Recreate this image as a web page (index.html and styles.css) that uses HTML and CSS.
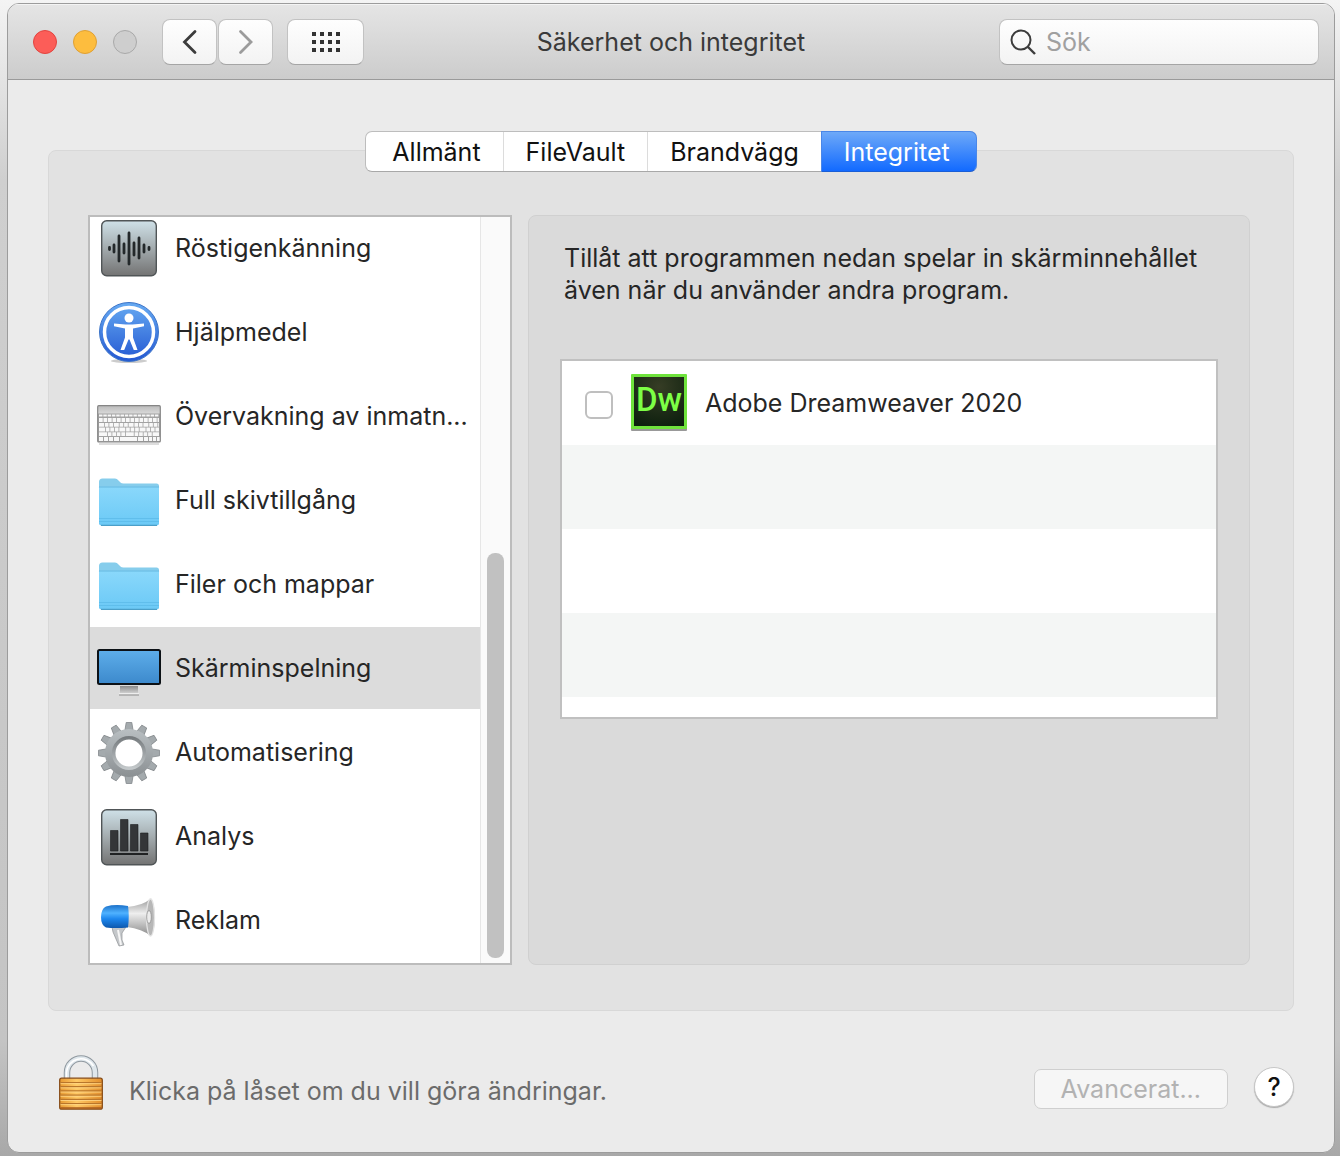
FILE: index.html
```html
<!DOCTYPE html>
<html lang="sv">
<head>
  <meta charset="UTF-8">
  <title>Säkerhet och integritet</title>
  <link rel="stylesheet" href="styles.css">
</head>
<body>
  <div class="window">
    <!-- Titelrad -->
    <header class="titlebar">
      <div class="titlebar-left">
        <div class="lights">
          <button class="light light-close" aria-label="Stäng"></button>
          <button class="light light-min" aria-label="Minimera"></button>
          <button class="light light-zoom" aria-label="Zooma" disabled></button>
        </div>
        <div class="nav">
          <button class="tool" aria-label="Bakåt">
            <svg width="16" height="26" viewBox="0 0 16 26"><path d="M13 2.500 2.500 13 13 23.500" fill="none" stroke="#3c3c3c" stroke-width="2.800" stroke-linecap="round"/></svg>
          </button>
          <button class="tool" aria-label="Framåt">
            <svg width="16" height="26" viewBox="0 0 16 26"><path d="M2.500 2.500 13 13 2.500 23.500" fill="none" stroke="#9b9b9b" stroke-width="2.800" stroke-linecap="round"/></svg>
          </button>
        </div>
        <button class="tool tool-wide" aria-label="Visa alla">
          <svg width="30" height="22" viewBox="0 0 30 22"><path d="M1 3h28M1 11h28M1 19h28" stroke="#333" stroke-width="4" stroke-dasharray="4 4"/></svg>
        </button>
      </div>
      <h1>Säkerhet och integritet</h1>
      <label class="search">
        <svg width="26" height="26" viewBox="0 0 26 26"><g fill="none" stroke="#3c3c3c" stroke-width="2"><circle cx="11" cy="11" r="9.500"/><path d="M17.500 17.500 25 25" stroke-width="2.400"/></g></svg>
        <input type="text" placeholder="Sök" aria-label="Sök">
      </label>
    </header>

    <main>
      <nav class="tabs">
        <button>Allmänt</button>
        <button>FileVault</button>
        <button>Brandvägg</button>
        <button class="active">Integritet</button>
      </nav>

      <div class="panel">
        <!-- Kategorier -->
        <div class="sidebar">
          <ul class="categories">
            <li>
              <svg class="icon" viewBox="0 0 64 64">
                <defs><linearGradient id="steel" x2="0" y2="1"><stop offset="0" stop-color="#cfe1e8"/><stop offset=".5" stop-color="#a3abae"/><stop offset="1" stop-color="#737373"/></linearGradient></defs>
                <rect x="4.700" y="4.700" width="54.600" height="55" rx="5" fill="url(#steel)" stroke="#505557" stroke-width="1.400"/>
                <path d="M12.500 31.500v2M17 29v7M22 20v25M27 28v9M32 17v31M37 27v12M42 22v20M47 29v7M52 31.500v2" stroke="#23282a" stroke-width="2.800" stroke-linecap="round"/>
              </svg>
              Röstigenkänning
            </li>
            <li>
              <svg class="icon" viewBox="0 0 64 64">
                <defs><linearGradient id="access" x2="0" y2="1"><stop offset="0" stop-color="#66aaf2"/><stop offset="1" stop-color="#2458d2"/></linearGradient></defs>
                <ellipse cx="32" cy="61" rx="18" ry="2" fill="#ccc"/>
                <circle cx="32" cy="32" r="29.500" fill="url(#access)" stroke="#3c74c8"/>
                <circle cx="32" cy="32" r="24.500" fill="none" stroke="#fff" stroke-width="3.500"/>
                <circle cx="32" cy="18" r="4.500" fill="#fff"/>
                <path d="M17 23.500l11.500 1h7l11.500-1v2.700l-11 2.300v9L40.500 50h-3.700L32.500 39.500h-1L27.200 50h-3.700L28 37.500v-9L17 26.200z" fill="#fff"/>
              </svg>
              Hjälpmedel
            </li>
            <li>
              <svg class="icon" viewBox="0 0 64 64">
                <defs><linearGradient id="alu" x2="0" y2="1"><stop offset="0" stop-color="#bcbcbc"/><stop offset="1" stop-color="#dadada"/></linearGradient></defs>
                <g transform="translate(0 1)">
                  <path d="M2 58h60v2H2z" fill="#ddd"/>
                  <path d="M1 21h62v8H1z" fill="url(#alu)"/>
                  <path d="M1 28.500h62V57H1z" fill="#a2a2a2"/>
                  <g stroke="#f8f8f8" fill="none">
                    <path d="M2 30.500h60" stroke-width="2" stroke-dasharray="3.500 .8"/>
                    <path d="M2 35h60" stroke-width="4" stroke-dasharray="3.700 .8"/>
                    <path d="M2 39.800h60" stroke-width="3.800" stroke-dasharray="5 .8 3.700 .8 3.700 .8"/>
                    <path d="M2 44.500h60" stroke-width="3.800" stroke-dasharray="6 .8 3.700 .8 3.700 .8 3.700 .8"/>
                    <path d="M2 49.200h60" stroke-width="3.800" stroke-dasharray="8 .8 3.700 .8 3.700 .8 3.700 .8 3.700 .8"/>
                    <path d="M2 54h4m1 0h4m1 0h4m1 0h5m1 0h17m1 0h5m1 0h4m1 0h3m1 0h3m1 0h3" stroke-width="3.800"/>
                  </g>
                  <rect x=".7" y="20.700" width="62.600" height="36.300" rx="1" fill="none" stroke="#858585" stroke-width="1.200"/>
                </g>
              </svg>
              Övervakning av inmatn...
            </li>
            <li>
              <svg class="icon" viewBox="0 0 64 64">
                <defs>
                  <linearGradient id="folder" x2="0" y2="1"><stop offset="0" stop-color="#8ad8fb"/><stop offset="1" stop-color="#6bc9f6"/></linearGradient>
                  <g id="folder-shape">
                    <path d="M2 54V12q0-3.500 3.500-3.500H18q2 0 3.500 2l2 2q1 1 3 1h33q2.500 0 2.500 2.500v38z" fill="#86cdec"/>
                    <path d="M2 17.500q0-1 1-1h58q1 0 1 1V53q0 2.500-2.500 2.500h-55Q2 55.500 2 53z" fill="url(#folder)"/>
                    <path d="M2 17h60" stroke="#66b7df"/>
                    <path d="M2 48.500h60M2 51.500h60" stroke="#5cbae8" stroke-width=".8"/>
                    <path d="M4 55.300h56" stroke="#4b9fc8" stroke-width="1.300"/>
                  </g>
                </defs>
                <use href="#folder-shape" y="2"/>
              </svg>
              Full skivtillgång
            </li>
            <li>
              <svg class="icon" viewBox="0 0 64 64"><use href="#folder-shape" y="2"/></svg>
              Filer och mappar
            </li>
            <li class="selected">
              <svg class="icon" viewBox="0 0 64 64">
                <defs>
                  <linearGradient id="screen" x2="0" y2="1"><stop offset="0" stop-color="#5eaeea"/><stop offset="1" stop-color="#3c89cc"/></linearGradient>
                  <linearGradient id="stand" x2="0" y2="1"><stop offset="0" stop-color="#8b8b8b"/><stop offset="1" stop-color="#d8d8d8"/></linearGradient>
                </defs>
                <g transform="translate(0 3)">
                  <path d="M23 47h18v8H23z" fill="url(#stand)"/>
                  <path d="M22 54h20v1.500H22z" fill="#eee"/>
                  <path d="M22 56h20" stroke="#8c8c8c"/>
                  <rect x="1" y="11" width="62" height="34" rx="1.500" fill="url(#screen)" stroke="#0c1116" stroke-width="2"/>
                </g>
              </svg>
              Skärminspelning
            </li>
            <li>
              <svg class="icon" viewBox="0 0 64 64">
                <defs>
                  <linearGradient id="gear" gradientUnits="userSpaceOnUse" x1="0" y1="8" x2="0" y2="56"><stop offset="0" stop-color="#b9bfc2"/><stop offset="1" stop-color="#8b9093"/></linearGradient>
                  <linearGradient id="ring" x2="0" y2="1"><stop offset="0" stop-color="#777c7f"/><stop offset="1" stop-color="#c3c8ca"/></linearGradient>
                  <path id="teeth" d="M27.500 12l1.700-10.500h5.600L36.500 12zM27.500 52l1.700 10.500h5.600L36.500 52z"/>
                </defs>
                <g transform="translate(0 1)">
                  <g fill="#a4aaad" stroke="#83888b" stroke-width=".8">
                    <use href="#teeth"/>
                    <use href="#teeth" transform="rotate(30 32 32)"/>
                    <use href="#teeth" transform="rotate(60 32 32)"/>
                    <use href="#teeth" transform="rotate(90 32 32)"/>
                    <use href="#teeth" transform="rotate(120 32 32)"/>
                    <use href="#teeth" transform="rotate(150 32 32)"/>
                  </g>
                  <circle cx="32" cy="32" r="19" fill="none" stroke="url(#gear)" stroke-width="10"/>
                  <circle cx="32" cy="32" r="15.300" fill="#fff" stroke="url(#ring)" stroke-width="3.500"/>
                </g>
              </svg>
              Automatisering
            </li>
            <li>
              <svg class="icon" viewBox="0 0 64 64">
                <g transform="translate(0 1)">
                  <rect x="4.700" y="4.700" width="54.600" height="55" rx="5" fill="url(#steel)" stroke="#505557" stroke-width="1.400"/>
                  <path d="M13.500 25.500h7.500V46h-7.500zM23.500 14.500H31V46h-7.500zM33.500 19.500H41V46h-7.500zM43.500 28H51v18h-7.500z" fill="#343638" stroke="#1d1f20" stroke-width=".6"/>
                  <path d="M13 49h38" stroke="#202223" stroke-width="2"/>
                </g>
              </svg>
              Analys
            </li>
            <li>
              <svg class="icon" viewBox="0 0 64 64">
                <defs>
                  <linearGradient id="blue" x2="0" y2="1"><stop offset="0" stop-color="#1d72ca"/><stop offset=".35" stop-color="#4fb2ff"/><stop offset=".6" stop-color="#1d87ee"/><stop offset="1" stop-color="#0e58ad"/></linearGradient>
                  <linearGradient id="horn" x2="0" y2="1"><stop offset="0" stop-color="#999"/><stop offset=".4" stop-color="#eee"/><stop offset="1" stop-color="#8a8a8a"/></linearGradient>
                </defs>
                <g transform="translate(0 1)">
                  <path d="M15 38h14l-4 6v7l2 5-5 1-6-14z" fill="#c4c7ca" stroke="#8f9295" stroke-width=".7"/>
                  <path d="M21 41l3 15" stroke="#f6f6f6" stroke-width="2"/>
                  <path d="M30 18q15-1 24-8.500 4 7 4 19t-4 18.500Q45 40 30 38z" fill="url(#horn)"/>
                  <path d="M9 17.500Q18 15 31 17q1.500 10 0 21.500-13 1-22 0Q4 36 4 28t5-10.500z" fill="url(#blue)"/>
                  <ellipse cx="53.500" cy="28.500" rx="4" ry="18.500" fill="#b7b7b7" stroke="#e4e4e4" stroke-width="1.300"/>
                  <ellipse cx="52" cy="28" rx="2.300" ry="6.500" fill="#ececec" stroke="#888" stroke-width=".7"/>
                </g>
              </svg>
              Reklam
            </li>
          </ul>
          <div class="scrollbar"><div class="thumb"></div></div>
        </div>

        <!-- Program med åtkomst -->
        <section class="details">
          <p>Tillåt att programmen nedan spelar in skärminnehållet även när du använder andra program.</p>
          <ul class="apps">
            <li>
              <label>
                <input type="checkbox">
                <svg class="app-icon" width="58" height="58" viewBox="0 0 58 58">
                  <defs><radialGradient id="dw" cx=".5" cy=".2" r=".9"><stop offset="0" stop-color="#363d25"/><stop offset="1" stop-color="#0b1e0d"/></radialGradient></defs>
                  <rect x="1" y="1" width="56" height="56" rx="1" fill="#999"/>
                  <rect x="1" y="0" width="56" height="55" rx="1" fill="#6fe33c"/>
                  <rect x="4" y="3" width="50" height="49" fill="url(#dw)"/>
                  <text class="dw-text" x="29" y="37" text-anchor="middle">Dw</text>
                </svg>
                Adobe Dreamweaver 2020
              </label>
            </li>
            <li></li>
            <li></li>
            <li></li>
          </ul>
        </section>
      </div>
    </main>

    <footer>
      <button class="lock" aria-label="Lås upp">
        <svg width="46" height="56" viewBox="0 0 46 56">
          <defs><linearGradient id="gold" x2="1" y2="0"><stop offset="0" stop-color="#e79a32"/><stop offset=".4" stop-color="#ffc965"/><stop offset="1" stop-color="#e28d2b"/></linearGradient></defs>
          <path d="M9 24V17.500a14 14 0 0 1 28 0V24" fill="none" stroke="#8f989f" stroke-width="6.500"/>
          <path d="M9 24V17.500a14 14 0 0 1 28 0V24" fill="none" stroke="#dfe7ec" stroke-width="4.500"/>
          <path d="M8.500 24V17.500a14.500 14.500 0 0 1 27-6.500" fill="none" stroke="#fff" stroke-width="1.500"/>
          <rect x="1.700" y="23.200" width="42.600" height="31" rx="2" fill="url(#gold)" stroke="#874c18" stroke-width="1.300"/>
          <path d="M2.500 27.500h41M2.500 31.700h41M2.500 35.900h41M2.500 40.100h41M2.500 44.300h41M2.500 48.500h41" stroke="#b9762b" stroke-width="1.200"/>
          <path d="M2.500 28.700h41M2.500 32.900h41M2.500 37.100h41M2.500 41.300h41M2.500 45.500h41M2.500 49.700h41" stroke="#ffd98c" stroke-width=".8"/>
          <path d="M2.500 53h41" stroke="#a85b1d" stroke-width="1.500"/>
        </svg>
      </button>
      <span class="hint">Klicka på låset om du vill göra ändringar.</span>
      <button class="advanced" disabled>Avancerat...</button>
      <button class="help" aria-label="Hjälp">?</button>
    </footer>
  </div>
</body>
</html>
```
FILE: styles.css
```css
* {
  box-sizing: border-box;
}

body {
  margin: 0;
  padding: 3px 5px 3px 7px;
  height: 100vh;
  background: linear-gradient(#f4f4f4, #cfcfcf 180px, #c4c4c4 90%, #a8a8a8);
  font-family: Inter, "Liberation Sans", sans-serif;
  font-size: 25px;
  line-height: 32px;
  color: #262626;
}

button, input {
  font: inherit;
  color: inherit;
}
button {
  padding: 0;
  border: none;
}
ul {
  list-style: none;
  margin: 0;
  padding: 0;
}
svg {
  display: block;
  flex: none;
}

.window {
  height: 100%;
  display: flex;
  flex-direction: column;
  background: #ebebeb;
  border: 1px solid #9c9c9c;
  border-radius: 12px;
  overflow: hidden;
}

/* Titelrad */
.titlebar {
  display: grid;
  grid-template-columns: 1fr auto 1fr;
  align-items: center;
  height: 76px;
  padding: 0 15px;
  background: linear-gradient(#e5e5e5, #cccccc);
  border-bottom: 1px solid #9a9a9a;
  box-shadow: inset 0 1px #f4f4f4;
}
.titlebar h1 {
  margin: 0;
  font-size: 25px;
  font-weight: 400;
  color: #3a3a3a;
}
.titlebar-left, .lights, .nav {
  display: flex;
  align-items: center;
}
.titlebar-left {
  gap: 14px;
}
.lights {
  gap: 16px;
  margin: 0 11px 0 10px;
}
.light {
  width: 24px;
  height: 24px;
  border: 1px solid #e2443f;
  border-radius: 50%;
  background: #fc5d58;
}
.light-min {
  background: #fdbd3e;
  border-color: #dfa034;
}
.light-zoom {
  background: #cecece;
  border-color: #a9a9a9;
}
.nav {
  gap: 1px;
}
.tool {
  display: flex;
  align-items: center;
  justify-content: center;
  width: 55px;
  height: 46px;
  background: linear-gradient(#fefefe, #f3f3f3);
  border: 1px solid #c2c2c2;
  border-bottom-color: #a5a5a5;
  border-radius: 8px;
}
.tool-wide {
  width: 77px;
}
.search {
  justify-self: end;
  display: flex;
  align-items: center;
  gap: 10px;
  width: 320px;
  height: 46px;
  padding: 0 10px;
  background: linear-gradient(#fefefe, #f3f3f3);
  border: 1px solid #c2c2c2;
  border-bottom-color: #a5a5a5;
  border-radius: 8px;
}
.search input {
  flex: 1;
  min-width: 0;
  padding: 0;
  border: none;
  outline: none;
  background: none;
}
.search input::placeholder {
  color: #a0a0a0;
}

/* Innehåll */
main {
  flex: 1;
  min-height: 0;
  display: flex;
  flex-direction: column;
  padding: 51px 40px 0;
}
.tabs {
  align-self: center;
  display: flex;
  height: 41px;
  margin-bottom: -22px;
  z-index: 1;
  background: #fff;
  border: 1px solid #bdbdbd;
  border-bottom-color: #a8a8a8;
  border-radius: 7px;
}
.tabs button {
  padding: 0 22px;
  background: none;
  border-right: 1px solid #dcdcdc;
  color: #111;
}
.tabs button:first-child {
  padding-left: 26px;
}
.tabs .active {
  margin: -1px;
  padding-right: 26px;
  border: 1px solid #4a87e8;
  border-bottom-color: #1a5ed6;
  border-radius: 0 7px 7px 0;
  background: linear-gradient(#6ea9f8, #126aff);
  color: #fff;
}
.panel {
  flex: 1;
  min-height: 0;
  display: flex;
  gap: 16px;
  padding: 64px 43px 45px 39px;
  background: #e2e2e2;
  border: 1px solid #d8d8d8;
  border-radius: 8px;
}

.sidebar {
  flex: none;
  width: 424px;
  display: flex;
  background: #fff;
  border: 2px solid #bcbcbc;
}
/* listan är rullad till botten */
.categories {
  flex: 1;
  min-width: 0;
  display: flex;
  flex-direction: column;
  justify-content: flex-end;
  overflow: hidden;
  padding-bottom: 2px;
}
.categories li {
  flex: none;
  display: flex;
  align-items: center;
  gap: 14px;
  height: 82px;
  margin-top: 2px;
  padding: 0 7px;
  white-space: nowrap;
}
.categories .selected {
  background: #dcdcdc;
}
.icon {
  width: 64px;
  height: 64px;
}
.scrollbar {
  display: flex;
  flex-direction: column;
  justify-content: flex-end;
  width: 30px;
  padding: 5px 6px;
  background: #fafafa;
  border-left: 1px solid #e6e6e6;
}
.thumb {
  height: 55%;
  border-radius: 8px;
  background: #c1c1c1;
}

.details {
  flex: 1;
  min-width: 0;
  padding: 26px 31px;
  background: #dadada;
  border: 1px solid #d0d0d0;
  border-radius: 8px;
}
.details p {
  margin: 0 4px 53px;
}
.apps {
  height: 360px;
  background: #fff;
  border: 2px solid #c0c0c0;
}
.apps li {
  height: 84px;
}
.apps li:nth-child(even) {
  background: #f4f6f5;
}
.apps label {
  display: flex;
  align-items: center;
  height: 100%;
  padding-left: 23px;
}
.apps input {
  appearance: none;
  width: 28px;
  height: 28px;
  margin: 4px 17px 0 0;
  border: 2px solid #bfbfbf;
  border-radius: 6px;
  background: #fff;
}
.app-icon {
  margin-right: 17px;
}
.dw-text {
  font-family: Roboto, sans-serif;
  font-size: 33px;
  font-weight: 500;
  fill: #7dff45;
}

/* Sidfot */
footer {
  display: flex;
  align-items: center;
  padding: 44px 40px 41px 50px;
}
.lock {
  margin-right: 25px;
  background: none;
}
.hint {
  flex: 1;
  padding-top: 16px;
  color: #6b6b6b;
}
.advanced {
  height: 40px;
  margin: 12px 26px 0 0;
  padding: 0 26px;
  background: #f6f6f6;
  border: 1px solid #cfcfcf;
  border-radius: 7px;
  color: #b2b2b2;
}
.help {
  width: 40px;
  height: 40px;
  margin-top: 8px;
  border: 1px solid #c6c6c6;
  border-radius: 50%;
  background: #fff;
  box-shadow: 0 1px 1px #aaa;
  color: #111;
  font-weight: 500;
}
```
